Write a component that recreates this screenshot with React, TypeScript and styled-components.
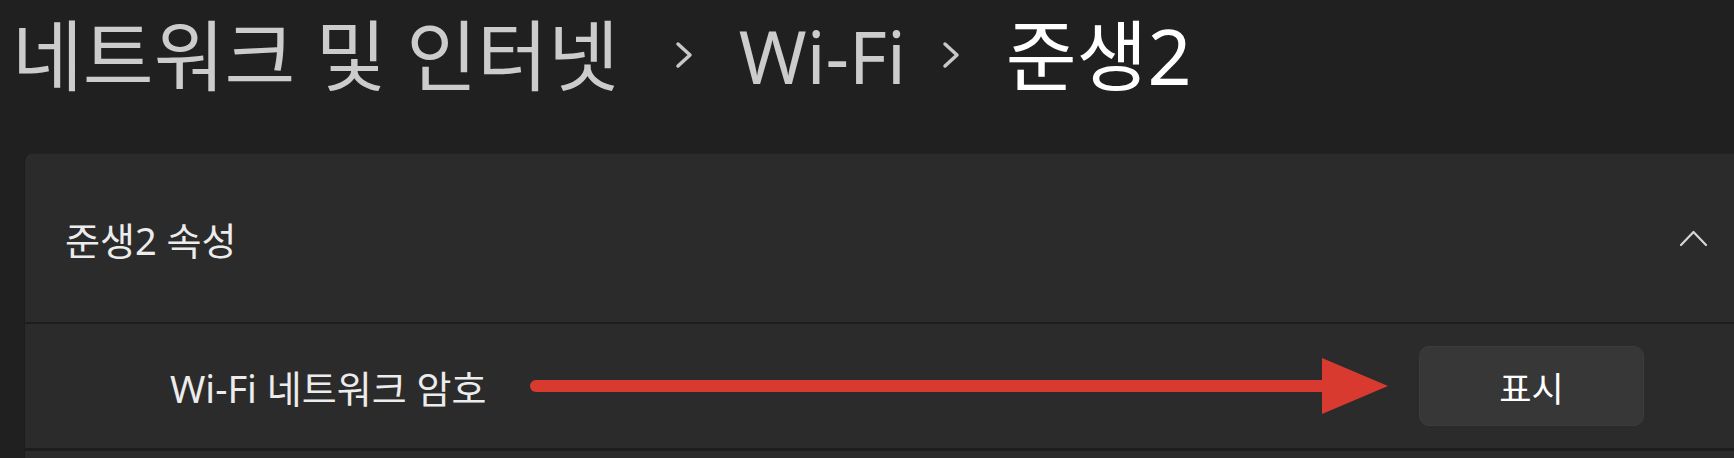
import React from 'react';
import styled, { createGlobalStyle } from 'styled-components';

const GlobalStyle = createGlobalStyle`
  html, body {
    margin: 0;
    padding: 0;
    background: #202020;
    overflow: hidden;
  }
  body {
    font-family: "Noto Sans", "Noto Sans CJK KR", sans-serif;
    color: #ffffff;
  }
`;

const Page = styled.div`
  width: 1734px;
  height: 458px;
  overflow: hidden;
`;

const Breadcrumb = styled.nav`
  display: flex;
  align-items: center;
  height: 110px;
  padding-left: 12px;
  font-size: 77px;
  line-height: 1;
`;

const Crumb = styled.span<{ $current?: boolean; $latin?: boolean }>`
  color: ${(p) => (p.$current ? '#ffffff' : '#cccccc')};
  font-size: ${(p) => (p.$latin ? '73px' : '77px')};
  white-space: nowrap;
`;

const Separator = styled.svg<{ $before: number }>`
  width: 18px;
  height: 28px;
  margin: 0 46px 0 ${(p) => p.$before}px;
  flex-shrink: 0;
`;

const Card = styled.section`
  margin: 43px 0 0 24px;
  background: #2b2b2b;
  border-top: 1px solid #232323;
  border-left: 1px solid #1d1d1d;
  border-radius: 8px 0 0 0;
`;

const Header = styled.div`
  display: flex;
  align-items: center;
  justify-content: space-between;
  height: 168px;
  padding: 0 26px 0 40px;
  border-bottom: 2px solid #1d1d1d;
  font-size: 38px;
  color: #ececec;
`;

const Row = styled.div`
  display: flex;
  align-items: center;
  height: 124px;
  padding: 0 90px 0 145px;
  border-bottom: 3px solid #1d1d1d;
`;

const Label = styled.span`
  font-size: 38px;
  color: #ececec;
  white-space: nowrap;
`;

const Arrow = styled.div`
  flex: 1;
  display: flex;
  align-items: center;
  margin: 0 31px 0 44px;
`;

const Shaft = styled.div`
  flex: 1;
  height: 12px;
  margin-right: -2px;
  border-radius: 6px 0 0 6px;
  background: #d93a30;
`;

const ArrowHead = styled.svg`
  width: 66px;
  height: 56px;
  flex-shrink: 0;
`;

const Button = styled.button`
  width: 225px;
  height: 80px;
  border: 1px solid #3c3c3c;
  border-radius: 10px;
  background: #373737;
  color: #ffffff;
  font-family: "Noto Sans CJK KR", sans-serif;
  font-size: 35px;
  cursor: pointer;
`;

const NextRow = styled.div`
  height: 40px;
`;

const ChevronRight = ({ before }: { before: number }) => (
  <Separator $before={before} viewBox="0 0 18 28">
    <path d="M3 3 L15 14 L3 25" fill="none" stroke="#c8c8c8" strokeWidth="3.5" strokeLinecap="round" strokeLinejoin="round" />
  </Separator>
);

const App: React.FC = () => {
  return (
    <Page>
      <GlobalStyle />
      <Breadcrumb>
        <Crumb>네트워크 및 인터넷</Crumb>
        <ChevronRight before={56} />
        <Crumb $latin>Wi-Fi</Crumb>
        <ChevronRight before={36} />
        <Crumb $current>준생2</Crumb>
      </Breadcrumb>
      <Card>
        <Header>
          <span>준생2 속성</span>
          <svg width="29" height="18" viewBox="0 0 29 18">
            <path d="M2 16 L14.5 3 L27 16" fill="none" stroke="#d6d6d6" strokeWidth="2.2" strokeLinecap="round" strokeLinejoin="round" />
          </svg>
        </Header>
        <Row>
          <Label>Wi-Fi 네트워크 암호</Label>
          <Arrow>
            <Shaft />
            <ArrowHead viewBox="0 0 66 56">
              <polygon points="0,0 66,28 0,56" fill="#d93a30" />
            </ArrowHead>
          </Arrow>
          <Button>표시</Button>
        </Row>
        <NextRow />
      </Card>
    </Page>
  );
};

export default App;
